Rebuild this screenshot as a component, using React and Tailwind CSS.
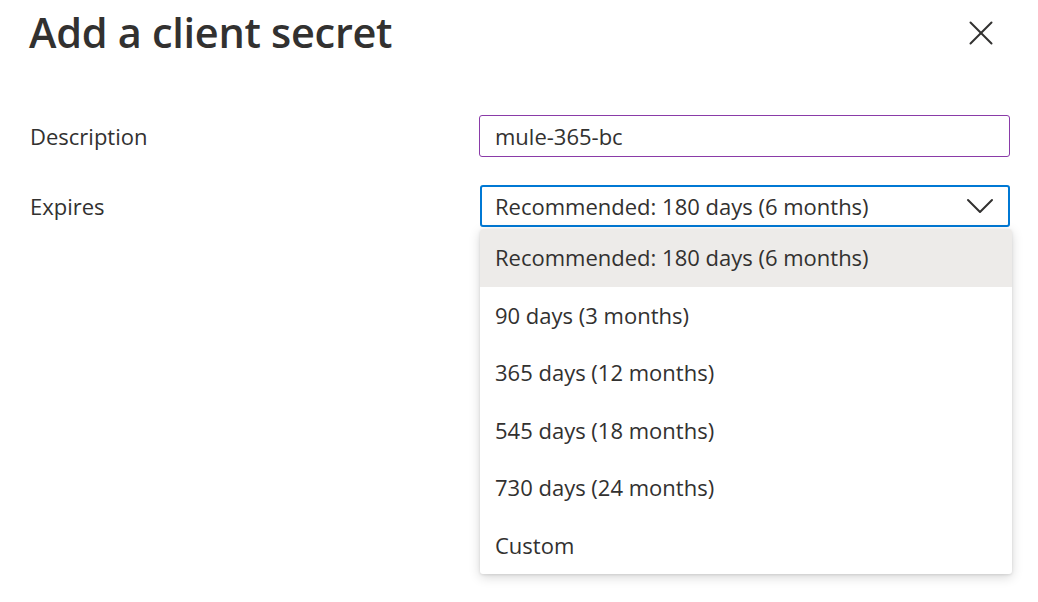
import { X, ChevronDown } from 'lucide-react';

const options = [
    'Recommended: 180 days (6 months)',
    '90 days (3 months)',
    '365 days (12 months)',
    '545 days (18 months)',
    '730 days (24 months)',
    'Custom',
];

export default function App() {
    return (
        <div className="w-[1038px] h-[602px] bg-white text-[#323130] overflow-hidden font-['Open_Sans',sans-serif]">
            {/* Header */}
            <div className="flex items-center justify-between pl-[29px] pr-[36px] pt-[2px] h-[64px]">
                <h1 className="text-[41.5px] font-semibold tracking-[-0.3px] leading-none">Add a client secret</h1>
                <X size={42} strokeWidth={1.15} className="text-[#323130]" />
            </div>

            {/* Form */}
            <div className="pl-[30px] pr-[28px] pt-[51px]">
                <div className="flex items-center h-[42px]">
                    <label className="w-[449px] text-[22px] pt-[1px]">Description</label>
                    <div className="flex-1 h-[42px] border border-[#8a3ba8] rounded-[3px] flex items-center px-[15px] pt-[1px] text-[22px]">
                        mule-365-bc
                    </div>
                </div>

                <div className="flex items-start mt-[28px]">
                    <label className="w-[450px] text-[22px] h-[42px] pt-[1px] flex items-center">Expires</label>
                    <div className="flex-1 relative">
                        <div className="h-[42px] border-2 border-[#0078d4] rounded-[3px] flex items-center justify-between pl-[13px] pr-[4px] text-[22px]">
                            <span className="pt-[1px]">Recommended: 180 days (6 months)</span>
                            <ChevronDown size={48} strokeWidth={1} />
                        </div>
                        <div className="absolute left-0 right-[-2px] top-[44px] bg-white rounded-[3px] shadow-[0_3px_12px_rgba(0,0,0,0.16),0_1px_3px_rgba(0,0,0,0.1)] overflow-hidden">
                            {options.map((o, i) => (
                                <div
                                    key={o}
                                    className={
                                        i === 0
                                            ? 'h-[57.5px] flex items-center px-[15px] text-[22px] bg-[#edebe9]'
                                            : 'h-[57.5px] flex items-center px-[15px] text-[22px]'
                                    }
                                >
                                    {o}
                                </div>
                            ))}
                        </div>
                    </div>
                </div>
            </div>
        </div>
    );
}
